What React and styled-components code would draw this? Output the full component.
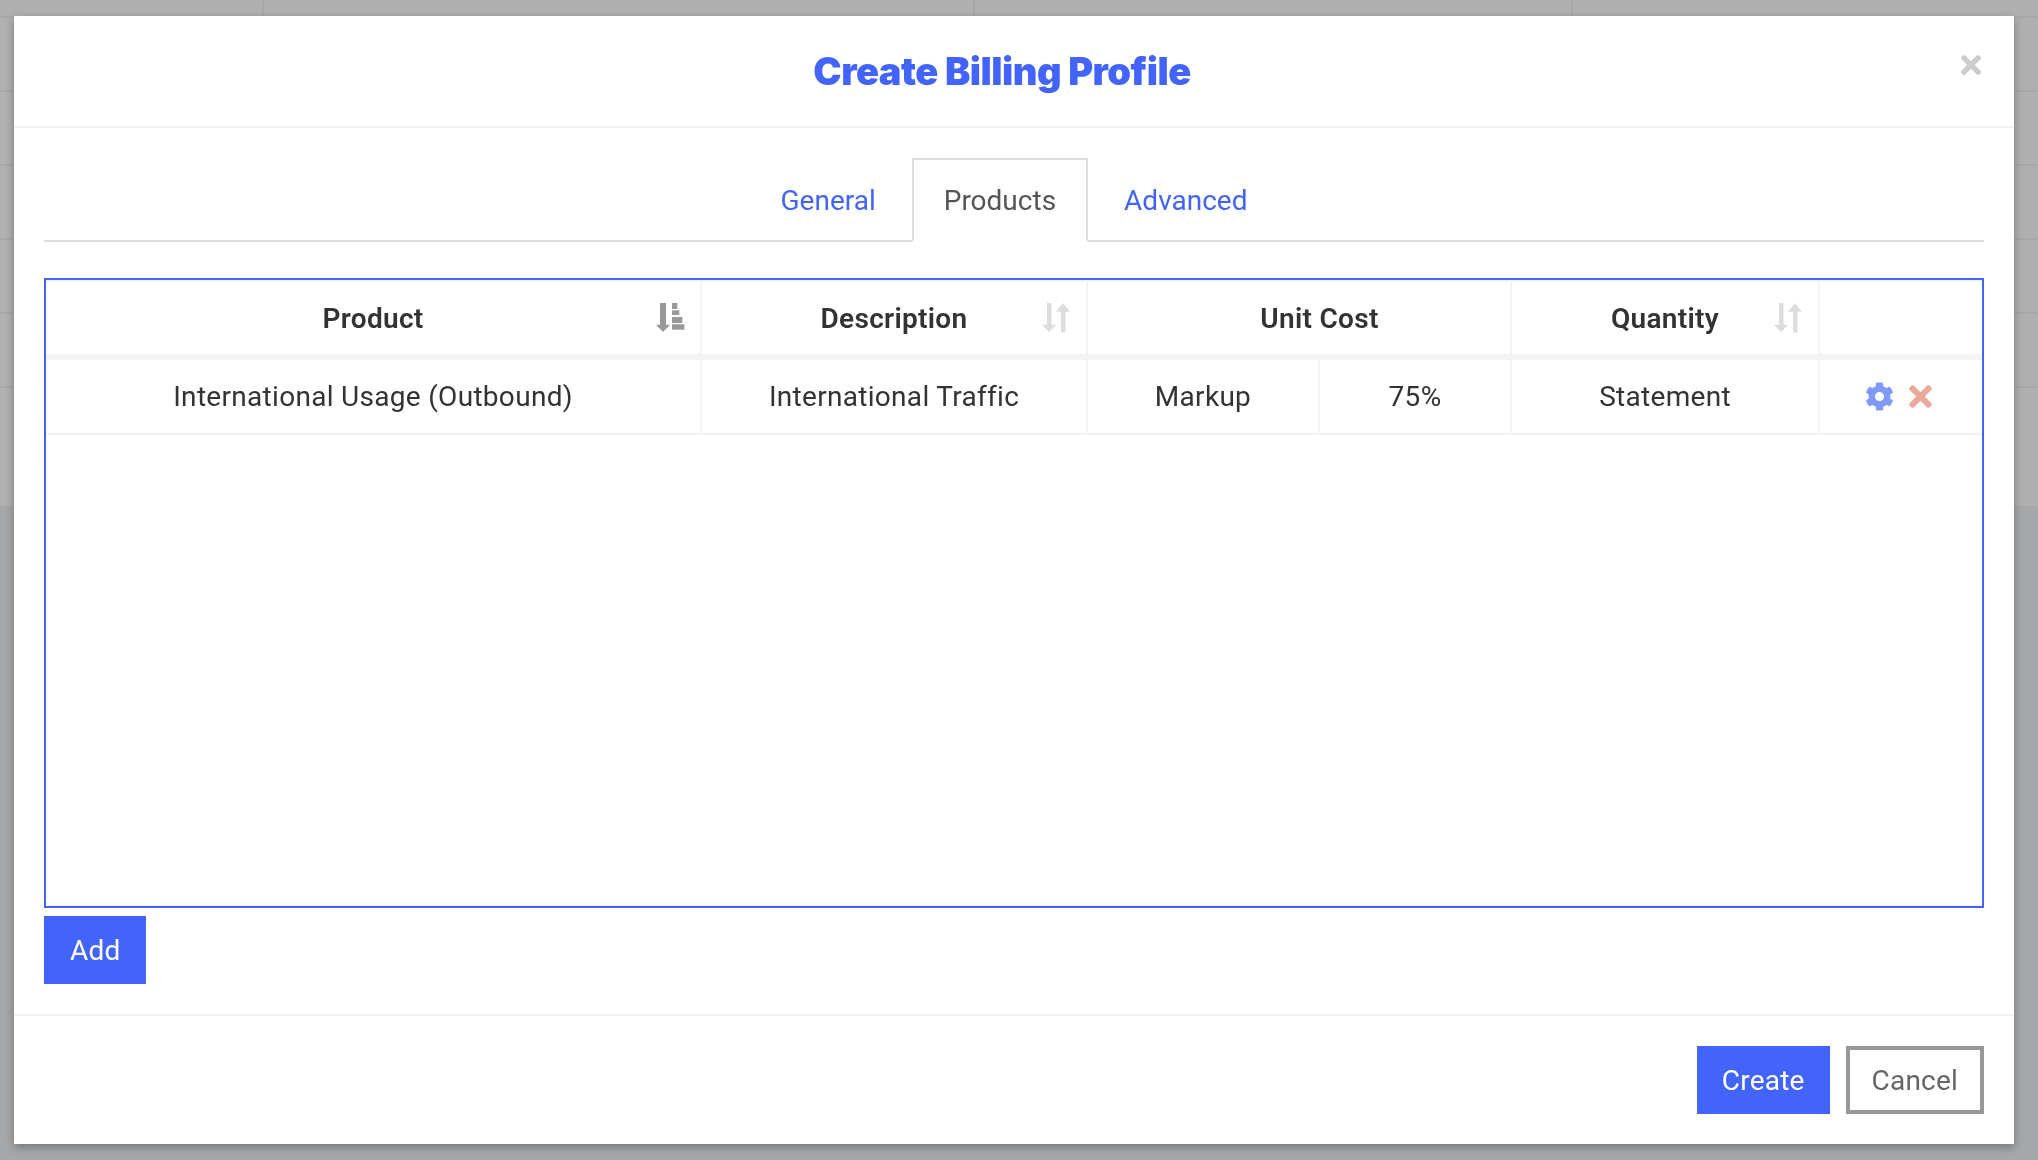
import React from 'react'
import styled, { createGlobalStyle } from 'styled-components'
import { FaCog, FaTimes } from 'react-icons/fa'

const GlobalStyle = createGlobalStyle`
    html, body {
        margin: 0;
        height: 100%;
        overflow: hidden;
    }
    body {
        background-color: #f0f2f5;
        font-family: Roboto, "Noto Sans", sans-serif;
    }
    * {
        box-sizing: border-box;
    }
`

// Page behind the dialog
const PageBehind = styled.div`
    height: 506px;
    background-color: #fff;
`

const PageHead = styled.div`
    height: 18px;
    display: grid;
    grid-template-columns: 264px 711px 598px 1fr;
    border-bottom: 2px solid #f3f3f3;
`

const PageHeadCell = styled.div`
    border-right: 2px solid #f3f3f3;
`

const PageRow = styled.div`
    height: 74px;
    border-bottom: 2px solid #f3f3f3;
`

const Backdrop = styled.div`
    position: fixed;
    inset: 0;
    background-color: rgba(0, 0, 0, 0.31);
`

const Modal = styled.div`
    position: absolute;
    top: 16px;
    left: 14px;
    width: 2000px;
    height: 1128px;
    display: flex;
    flex-direction: column;
    background-color: #fff;
    box-shadow: 0 3px 9px rgba(0, 0, 0, 0.3);
`

const Header = styled.header`
    height: 112px;
    flex-shrink: 0;
    display: flex;
    align-items: center;
    padding: 0 33px 0 29px;
    border-bottom: 2px solid #f3f3f3;
`

const Title = styled.h1`
    flex: 1;
    margin: 0;
    text-align: center;
    font-family: Inter, sans-serif;
    font-size: 38px;
    font-weight: 900;
    letter-spacing: -0.5px;
    color: #4264fa;
`

const CloseButton = styled.button`
    width: 20px;
    height: 32px;
    margin-top: -12px;
    padding: 0;
    display: flex;
    align-items: center;
    justify-content: center;
    border: none;
    background: none;
    color: #ccc;
    font-size: 30px;
`

const Body = styled.div`
    flex: 1;
    padding: 30px 30px 0;
`

const Tabs = styled.nav`
    height: 84px;
    display: flex;
    justify-content: center;
    gap: 4px;
    border-bottom: 2px solid #ddd;
`

const Tab = styled.a`
    height: 84px;
    padding: 0 30px;
    display: flex;
    align-items: center;
    font-size: 28px;
    color: ${props => props.$active ? '#555' : '#4264fa'};
    background-color: ${props => props.$active ? '#fff' : 'transparent'};
    border: 2px solid ${props => props.$active ? '#ddd' : 'transparent'};
    border-bottom: 2px solid ${props => props.$active ? '#fff' : 'transparent'};
`

const TableBox = styled.div`
    height: 630px;
    margin-top: 36px;
    border: 2px solid #4264fa;
`

const Table = styled.table`
    width: 100%;
    table-layout: fixed;
    border-collapse: separate;
    border-spacing: 0;
    font-size: 28px;
    letter-spacing: 0.3px;
    color: #333;
`

const HeadCell = styled.th`
    position: relative;
    height: 80px;
    padding: 0 0 0 ${props => props.$shift || 0}px;
    font-weight: 600;
    border-top: 2px solid #f3f3f3;
    border-bottom: 6px solid #f3f3f3;
    border-right: 2px solid #f3f3f3;

    &:last-child {
        border-right: none;
    }
`

const Cell = styled.td`
    height: 75px;
    padding: 0;
    text-align: center;
    border-bottom: 2px solid #f3f3f3;
    border-right: 2px solid #f3f3f3;

    &:last-child {
        border-right: none;
    }
`

const SortSlot = styled.span`
    position: absolute;
    top: 21px;
    right: 15px;
    display: flex;
`

const SortSvg = styled.svg`
    width: 29px;
    height: 30px;
    fill: ${props => props.$active ? '#999' : '#ddd'};
`

const Actions = styled.div`
    display: flex;
    align-items: center;
    justify-content: center;
    gap: 10px;
`

const GearIcon = styled(FaCog)`
    font-size: 29px;
    color: #8099fb;
`

const RemoveIcon = styled(FaTimes)`
    font-size: 33px;
    color: #eaa99c;
`

const Button = styled.button`
    height: 68px;
    padding: 0 ${props => props.$pad || 26}px;
    font-family: inherit;
    font-size: 28px;
    letter-spacing: 0.2px;
    color: #fff;
    background-color: #4264fa;
    border: none;
`

const AddButton = styled(Button)`
    display: block;
    margin-top: 8px;
`

const CancelButton = styled(Button)`
    color: #666;
    background-color: #fff;
    border: 4px solid #999;
`

const Footer = styled.footer`
    flex-shrink: 0;
    display: flex;
    justify-content: flex-end;
    gap: 16px;
    padding: 30px;
    border-top: 2px solid #f3f3f3;
`

function SortIcon() {
    return (
        <SortSvg viewBox="0 0 29 30">
            <path d="M5 0h4.500v21.700H14L7 29 0 21.700h5z" />
            <path d="M19 29.500h4.500V8.700H28L21 0l-7 8.700h5z" />
        </SortSvg>
    )
}

function SortedIcon() {
    return (
        <SortSvg $active viewBox="0 0 29 30">
            <path d="M4 0h6v21.700h4L7 29 0 21.700h4z" />
            <path d="M16 0h5.300v6H16zM16 7.300h7.300V12H16zM16 14h10.300v6H16zM16 21.300h12.300v5.400H16z" />
        </SortSvg>
    )
}

function App() {
    return (
        <>
            <GlobalStyle />
            <PageBehind>
                <PageHead>
                    <PageHeadCell />
                    <PageHeadCell />
                    <PageHeadCell />
                </PageHead>
                <PageRow />
                <PageRow />
                <PageRow />
                <PageRow />
                <PageRow />
            </PageBehind>
            <Backdrop />
            <Modal>
                <Header>
                    <Title>Create Billing Profile</Title>
                    <CloseButton><FaTimes /></CloseButton>
                </Header>
                <Body>
                    <Tabs>
                        <Tab>General</Tab>
                        <Tab $active>Products</Tab>
                        <Tab>Advanced</Tab>
                    </Tabs>
                    <TableBox>
                        <Table>
                            <colgroup>
                                <col width="656" />
                                <col width="386" />
                                <col width="232" />
                                <col width="192" />
                                <col width="308" />
                                <col width="162" />
                            </colgroup>
                            <thead>
                                <tr>
                                    <HeadCell>Product<SortSlot><SortedIcon /></SortSlot></HeadCell>
                                    <HeadCell>Description<SortSlot><SortIcon /></SortSlot></HeadCell>
                                    <HeadCell colSpan={2} $shift={41}>Unit Cost</HeadCell>
                                    <HeadCell>Quantity<SortSlot><SortIcon /></SortSlot></HeadCell>
                                    <HeadCell />
                                </tr>
                            </thead>
                            <tbody>
                                <tr>
                                    <Cell>International Usage (Outbound)</Cell>
                                    <Cell>International Traffic</Cell>
                                    <Cell>Markup</Cell>
                                    <Cell>75%</Cell>
                                    <Cell>Statement</Cell>
                                    <Cell>
                                        <Actions>
                                            <GearIcon />
                                            <RemoveIcon />
                                        </Actions>
                                    </Cell>
                                </tr>
                            </tbody>
                        </Table>
                    </TableBox>
                    <AddButton>Add</AddButton>
                </Body>
                <Footer>
                    <Button $pad={25}>Create</Button>
                    <CancelButton $pad={22}>Cancel</CancelButton>
                </Footer>
            </Modal>
        </>
    )
}

export default App
